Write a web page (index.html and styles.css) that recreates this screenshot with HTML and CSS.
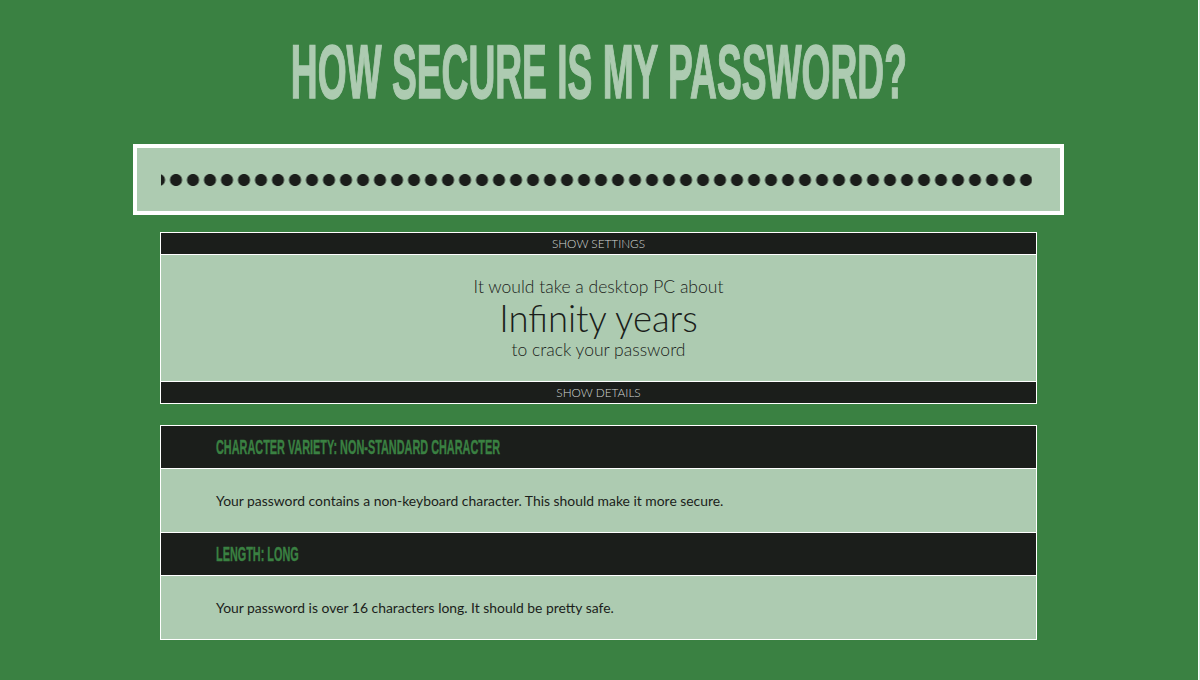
FILE: index.html
```html
<!DOCTYPE html>
<html lang="en">
<head>
    <meta charset="UTF-8">
    <meta name="viewport" content="width=device-width, initial-scale=1.0">
    <title>How Secure Is My Password?</title>
    <link rel="stylesheet" href="styles.css">
</head>
<body>
    <div class="page">
        <h1 class="title"><span>How secure is my password?</span></h1>

        <div class="pw-box">
            <div class="pw-dots" aria-label="password"></div>
        </div>

        <section class="result">
            <div class="bar">Show settings</div>
            <div class="estimate">
                <p class="lead">It would take a desktop PC about</p>
                <p class="time">Infinity years</p>
                <p class="tail">to crack your password</p>
            </div>
            <div class="bar">Show details</div>
        </section>

        <section class="checks">
            <div class="check">
                <h2><span>Character Variety: Non-Standard Character</span></h2>
                <p>Your password contains a non-keyboard character. This should make it more secure.</p>
            </div>
            <div class="check">
                <h2><span>Length: Long</span></h2>
                <p>Your password is over 16 characters long. It should be pretty safe.</p>
            </div>
        </section>
    </div>
</body>
</html>
```

FILE: styles.css
```css
html {
    background: #dfe6df;
}
body {
    margin: 0;
    padding: 0 1px 0 0;
    width: 1197px;
    height: 680px;
    background: #3a8142;
    border-right: 1px solid #fff;
    font-family: Lato, "Open Sans", sans-serif;
    color: #1b1e1b;
    overflow: hidden;
}
.page {
    width: 877px;
    margin: 0 auto;
    padding-top: 30px;
}
/* headline font is a condensed gothic, so squeeze a bold sans */
.title {
    display: flex;
    justify-content: center;
    margin: 0 0 30px;
    font-family: "Liberation Sans", Arial, sans-serif;
    font-weight: bold;
    font-size: 76px;
    line-height: 84px;
    text-transform: uppercase;
    color: #adcbb1;
    white-space: nowrap;
}
.title span {
    flex: none;
    display: inline-block;
    transform: scaleX(0.489);
    -webkit-text-stroke: 1.5px #adcbb1;
}
.pw-box {
    margin: 0 -27px;
    height: 63px;
    border: 4px solid #fff;
    background: #adcbb1;
    padding: 0 24px;
    display: flex;
    align-items: center;
}
.pw-dots {
    width: 871px;
    height: 12px;
    background-image: radial-gradient(circle, #1b1e1b 5.6px, transparent 6.4px);
    background-size: 17px 12px;
    background-position: -10.5px 0;
    background-repeat: repeat-x;
}
.result {
    margin-top: 17px;
    border: 1px solid #fff;
    background: #adcbb1;
}
.bar {
    background: #1b1e1b;
    color: #d4d8d4;
    font-size: 11.8px;
    font-weight: 300;
    text-transform: uppercase;
    text-align: center;
    height: 21px;
    line-height: 21px;
}
.estimate {
    border-top: 1px solid #fff;
    border-bottom: 1px solid #fff;
    height: 128px;
    text-align: center;
    padding-top: 21px;
    box-sizing: border-box;
}
.estimate p {
    margin: 0;
    font-weight: 300;
}
.lead {
    font-size: 17.5px;
    line-height: 22px;
}
.time {
    font-size: 36.5px;
    line-height: 40px;
}
.tail {
    font-size: 17.5px;
    line-height: 23px;
}
.checks {
    margin-top: 21px;
    border: 1px solid #fff;
}
.check h2 {
    margin: 0;
    height: 42px;
    padding-left: 55px;
    background: #1b1e1b;
    border-bottom: 1px solid #fff;
    font-family: "Liberation Sans", Arial, sans-serif;
    font-weight: bold;
    font-size: 21px;
    line-height: 42px;
    text-transform: uppercase;
    color: #3a8142;
    white-space: nowrap;
}
.check h2 span {
    display: inline-block;
    transform: scaleX(0.518);
    transform-origin: left center;
    -webkit-text-stroke: 0.4px #3a8142;
}
.check p {
    margin: 0;
    height: 63px;
    padding-left: 55px;
    background: #adcbb1;
    font-size: 13.9px;
    line-height: 63px;
}
.check + .check h2 {
    border-top: 1px solid #fff;
}
```
